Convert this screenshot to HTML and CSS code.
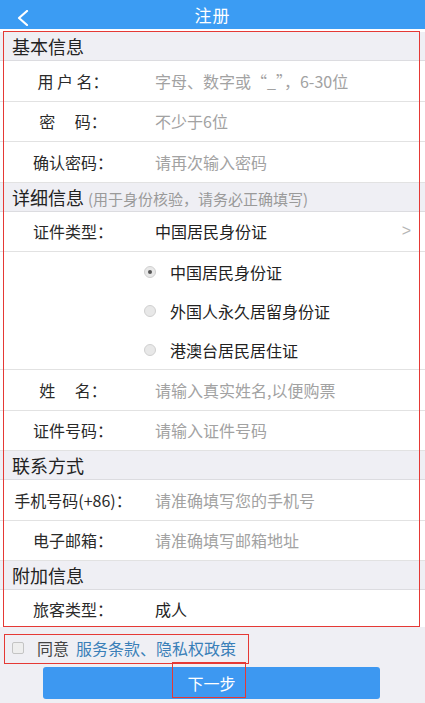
FILE: index.html
```html
<!DOCTYPE html>
<html lang="zh-CN">
<head>
  <meta charset="UTF-8" />
  <meta name="viewport" content="width=device-width, initial-scale=1" />
  <title>注册</title>
  <link rel="stylesheet" href="styles.css">
</head>
<body>
  <div class="topbar">
    <span class="back">
      <svg width="14" height="16" viewBox="0 0 14 16"><path d="M11 1 L3 8 L11 15" fill="none" stroke="#fff" stroke-width="2.2" stroke-linecap="round" stroke-linejoin="round"/></svg>
    </span>
    <span class="title">注册</span>
  </div>

  <div class="form">
    <!-- 基本信息 -->
    <div class="section">基本信息</div>
    <div class="row"><span class="label">用 户 名：</span><span class="value hint">字母、数字或“_”，6-30位</span></div>
    <div class="row"><span class="label">密&emsp;&nbsp;码：</span><span class="value hint">不少于6位</span></div>
    <div class="row"><span class="label">确认密码：</span><span class="value hint">请再次输入密码</span></div>

    <!-- 详细信息 -->
    <div class="section">详细信息 <small>(用于身份核验，请务必正确填写)</small></div>
    <div class="row"><span class="label">证件类型：</span><span class="value">中国居民身份证</span><span class="arrow">&gt;</span></div>
    <div class="radios">
      <div class="radio checked"><i></i>中国居民身份证</div>
      <div class="radio"><i></i>外国人永久居留身份证</div>
      <div class="radio"><i></i>港澳台居民居住证</div>
    </div>
    <div class="row"><span class="label">姓&emsp;&nbsp;名：</span><span class="value hint">请输入真实姓名,以便购票</span></div>
    <div class="row"><span class="label">证件号码：</span><span class="value hint">请输入证件号码</span></div>

    <!-- 联系方式 -->
    <div class="section">联系方式</div>
    <div class="row"><span class="label">手机号码(+86)：</span><span class="value hint">请准确填写您的手机号</span></div>
    <div class="row"><span class="label">电子邮箱：</span><span class="value hint">请准确填写邮箱地址</span></div>

    <!-- 附加信息 -->
    <div class="section">附加信息</div>
    <div class="row last"><span class="label">旅客类型：</span><span class="value">成人</span></div>
  </div>

  <div class="footer">
    <div class="agree"><i class="box"></i>同意 <a href="#">服务条款、隐私权政策</a></div>
    <button class="next">下一步</button>
  </div>

  <!-- red annotation frames -->
  <div class="mark mark-form"></div>
  <div class="mark mark-agree"></div>
  <div class="mark mark-next"></div>
</body>
</html>
```

FILE: styles.css
```css
body {
  margin: 0;
  font-family: "Noto Sans CJK SC", "Noto Sans", sans-serif;
  background-color: #efeff4;
  color: #222;
  position: relative;
  height: 703px;
  overflow: hidden;
}

.topbar {
  height: 29px;
  background-color: #3b9cf3;
  color: #fff;
  display: flex;
  align-items: center;
  justify-content: center;
  position: relative;
  border-bottom: 3px solid #fff;
}

.topbar .back {
  position: absolute;
  left: 16px;
  top: 7px;
}

.topbar .title {
  font-size: 17px;
  letter-spacing: 1px;
}

.form {
  background-color: #fff;
}

.section {
  height: 28px;
  line-height: 28px;
  padding-left: 12px;
  font-size: 18px;
  background-color: #efeff4;
  border-bottom: 1px solid #dcdce0;
}

.section small {
  font-size: 15px;
  color: #9a9a9a;
}

.row {
  height: 39.5px;
  display: flex;
  align-items: center;
  border-bottom: 1px solid #e2e2e2;
  font-size: 16px;
}

.row.last {
  height: 37px;
  border-bottom: none;
}

.label {
  width: 136px;
  margin-left: 5px;
  text-align: center;
  white-space: nowrap;
  color: #2a2a2a;
}

.value {
  margin-left: 14px;
  flex: 1;
}

.value.hint {
  color: #a2a2a2;
}

.arrow {
  color: #b5b5b5;
  font-family: "Liberation Sans", sans-serif;
  font-size: 16px;
  margin-right: 14px;
}

.radios {
  padding: 0 0 0 144px;
  border-bottom: 1px solid #e2e2e2;
}

.radio {
  height: 39px;
  display: flex;
  align-items: center;
  font-size: 16px;
}

.radio i {
  width: 10px;
  height: 10px;
  border-radius: 50%;
  background-color: #e8e8e8;
  border: 1px solid #d0d0d0;
  margin-right: 14px;
  position: relative;
}

.radio.checked i::after {
  content: "";
  position: absolute;
  left: 3px;
  top: 3px;
  width: 4px;
  height: 4px;
  border-radius: 50%;
  background-color: #555;
}

.footer {
  padding-top: 7px;
}

.agree {
  height: 28px;
  display: flex;
  align-items: center;
  padding-left: 12px;
  font-size: 16px;
  color: #444;
}

.agree .box {
  width: 10px;
  height: 10px;
  border: 1px solid #c4c4c4;
  border-radius: 2px;
  background-color: #eee;
  margin-right: 13px;
}

.agree a {
  color: #3a7fb8;
  text-decoration: none;
  margin-left: 7px;
}

.next {
  display: block;
  margin: 5px 0 0 43px;
  width: 337px;
  height: 32px;
  border: none;
  border-radius: 3px;
  background-color: #3d98f1;
  color: #fff;
  font-family: inherit;
  font-size: 16px;
}

.mark {
  position: absolute;
  border: 1px solid #e53935;
}

.mark-form {
  left: 3px;
  top: 31px;
  width: 415px;
  height: 594px;
}

.mark-agree {
  left: 4px;
  top: 634px;
  width: 243px;
  height: 28px;
}

.mark-next {
  left: 172px;
  top: 662px;
  width: 72px;
  height: 34px;
}
```
